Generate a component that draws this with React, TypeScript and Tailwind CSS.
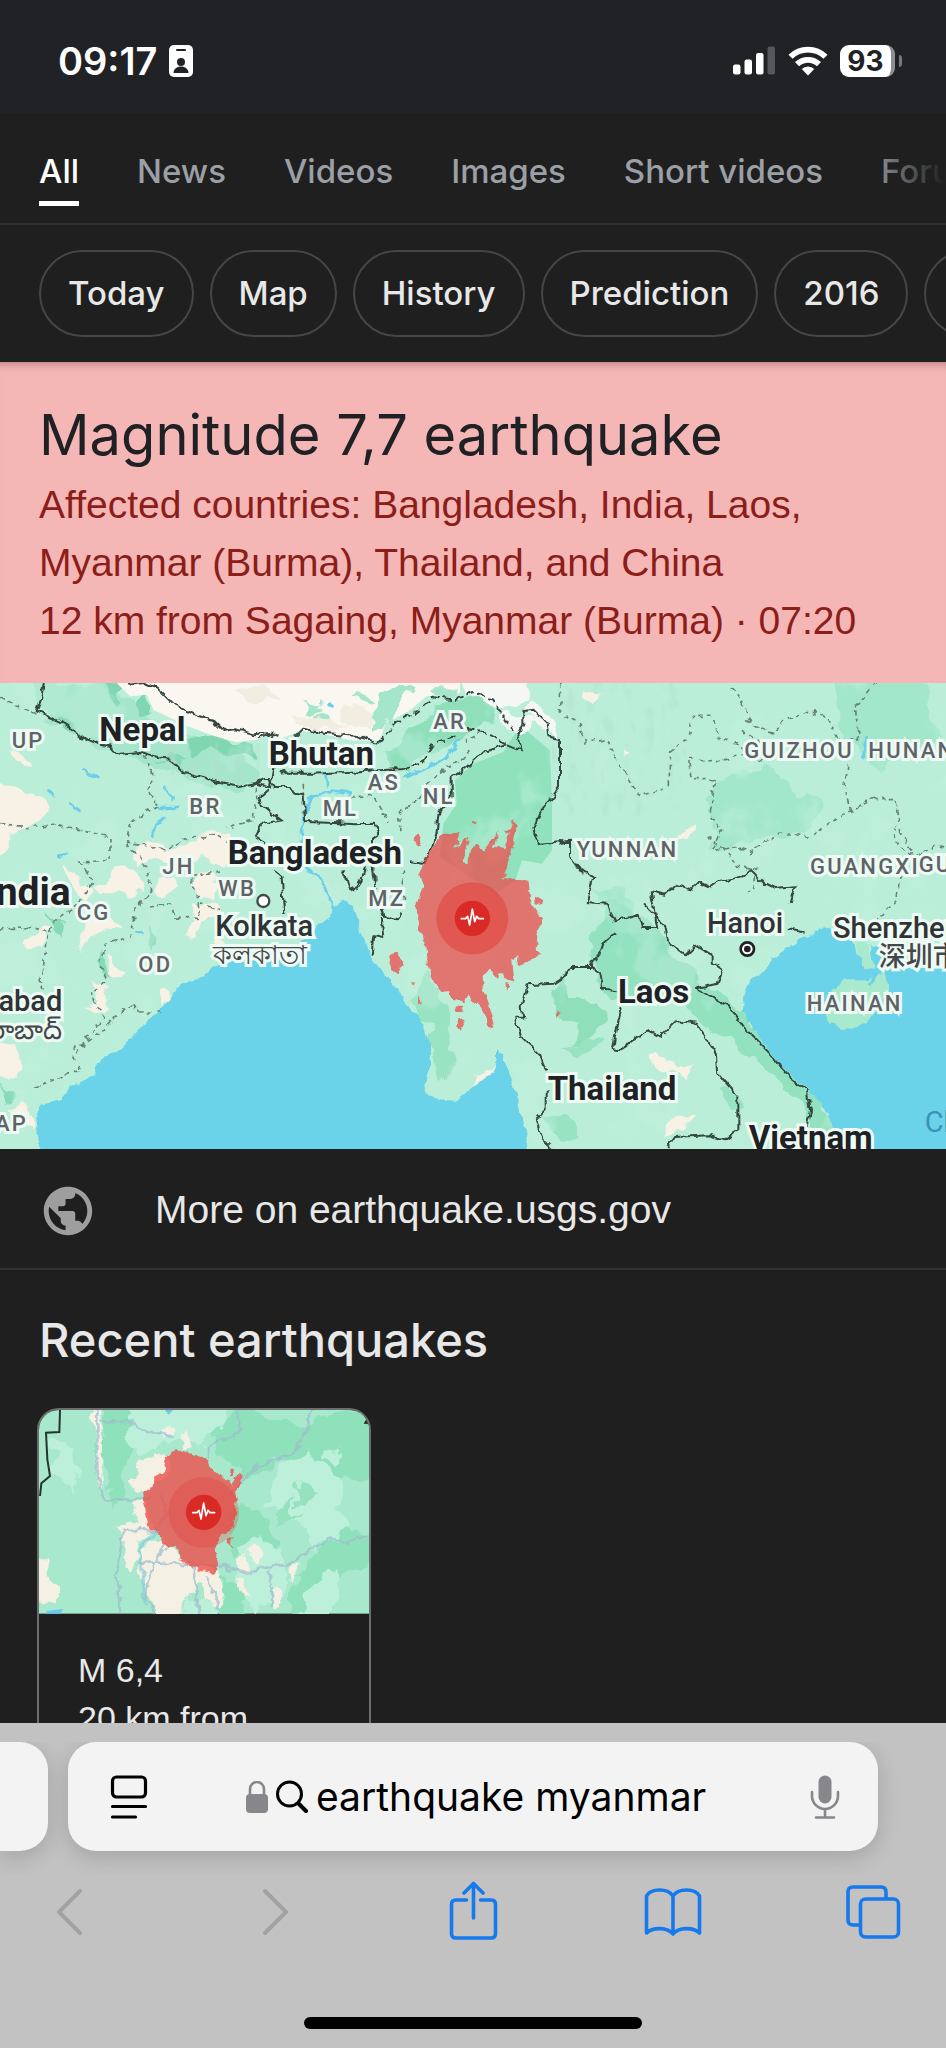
import { MdPublic } from 'react-icons/md';

type MapLabel = {
  text: string;
  x: number;
  y: number;
  kind: 'nation' | 'country' | 'city' | 'native' | 'region' | 'sea';
  end?: boolean;
};

const MAP_W = 2838;
const MAP_H = 1398;

const TABS = ['All', 'News', 'Videos', 'Images', 'Short videos', 'Forums'];
const CHIPS = ['Today', 'Map', 'History', 'Prediction', '2016', 'Live'];

const LABELS: MapLabel[] = [
  { text: 'UP', x: 35, y: 174, kind: 'region' },
  { text: 'BR', x: 568, y: 372, kind: 'region' },
  { text: 'JH', x: 487, y: 552, kind: 'region' },
  { text: 'WB', x: 655, y: 619, kind: 'region' },
  { text: 'CG', x: 230, y: 690, kind: 'region' },
  { text: 'OD', x: 415, y: 845, kind: 'region' },
  { text: 'AP', x: 84, y: 1324, kind: 'region', end: true },
  { text: 'ML', x: 968, y: 378, kind: 'region' },
  { text: 'AS', x: 1103, y: 299, kind: 'region' },
  { text: 'AR', x: 1300, y: 117, kind: 'region' },
  { text: 'NL', x: 1268, y: 342, kind: 'region' },
  { text: 'MZ', x: 1105, y: 649, kind: 'region' },
  { text: 'YUNNAN', x: 1730, y: 502, kind: 'region' },
  { text: 'GUIZHOU', x: 2233, y: 204, kind: 'region' },
  { text: 'HUNAN', x: 2605, y: 204, kind: 'region' },
  { text: 'GUANGXI', x: 2430, y: 553, kind: 'region' },
  { text: 'GUANGDONG', x: 2756, y: 547, kind: 'region' },
  { text: 'HAINAN', x: 2420, y: 962, kind: 'region' },
  { text: 'Nepal', x: 298, y: 138, kind: 'country' },
  { text: 'Bhutan', x: 806, y: 210, kind: 'country' },
  { text: 'Bangladesh', x: 683, y: 508, kind: 'country' },
  { text: 'Laos', x: 1854, y: 925, kind: 'country' },
  { text: 'Thailand', x: 1643, y: 1215, kind: 'country' },
  { text: 'Vietnam', x: 2246, y: 1363, kind: 'country' },
  { text: 'India', x: 212, y: 626, kind: 'nation', end: true },
  { text: 'Kolkata', x: 646, y: 729, kind: 'city' },
  { text: 'কলকাতা', x: 640, y: 816, kind: 'native' },
  { text: 'Hyderabad', x: 187, y: 954, kind: 'city', end: true },
  { text: 'హైదరాబాద్', x: 187, y: 1042, kind: 'native', end: true },
  { text: 'Hanoi', x: 2121, y: 720, kind: 'city' },
  { text: 'Shenzhen', x: 2499, y: 735, kind: 'city' },
  { text: '深圳市', x: 2636, y: 822, kind: 'native' },
  { text: 'China Sea', x: 2774, y: 1317, kind: 'sea' },
];

const HALO = '[paint-order:stroke_fill] [-webkit-text-stroke:6px_#eefaf4]';

const LABEL_STYLES = {
  nation: `text-[39px] font-bold text-[#202124] ${HALO}`,
  country: `text-[33px] font-bold text-[#202124] ${HALO}`,
  city: `text-[29px] font-medium text-[#303336] ${HALO}`,
  native: `text-[27px] font-medium text-[#45484b] ${HALO}`,
  region: `text-[22px] font-medium tracking-widest text-[#5f6368] ${HALO}`,
  sea: 'text-[29px] text-[#3a93b5]',
};

const SANS = "font-['Liberation_Sans',Arial,sans-serif]";
const DISPLAY = "font-['Inter',sans-serif]";

function StatusBar() {
  return (
    <header className={`flex h-[113px] shrink-0 items-center justify-between bg-[#202226] pt-2 pr-11 pl-[58px] text-white ${DISPLAY}`}>
      <div className="flex items-center gap-3">
        <time className="text-[38px] leading-none font-semibold">09:17</time>
        <svg width="24" height="32" viewBox="0 0 24 32" aria-hidden="true">
          <rect width="24" height="32" rx="5" fill="#fff" />
          <rect x="7" y="4" width="10" height="2" rx="1" fill="#202226" />
          <circle cx="12" cy="17" r="4" fill="#202226" />
          <path d="M4.500 28c0-4 3.500-6.500 7.500-6.500s7.500 2.500 7.500 6.500z" fill="#202226" />
        </svg>
      </div>
      <div className="flex items-center gap-3">
        <svg width="43" height="29" viewBox="0 0 43 29" aria-hidden="true">
          <rect x="0" y="18.500" width="7.500" height="10" rx="2.200" fill="#fff" />
          <rect x="11.500" y="13.500" width="7.500" height="15" rx="2.200" fill="#fff" />
          <rect x="23" y="7" width="7.500" height="21.500" rx="2.200" fill="#fff" />
          <rect x="34.500" y="0.500" width="7.500" height="28" rx="2.200" fill="#56575b" />
        </svg>
        <svg width="40" height="30" viewBox="0 0 40 30" aria-hidden="true" fill="none" stroke="#fff" strokeWidth="5.800">
          <path d="M2.500 10.800a25 25 0 0 1 35 0" />
          <path d="M9 18.200a16 16 0 0 1 22 0" />
          <path d="M20 29.500l-6.300-6.500a9 9 0 0 1 12.600 0z" fill="#fff" stroke="none" />
        </svg>
        <div className="flex items-center gap-1">
          <span className="flex h-8 w-[55px] items-center justify-center rounded-[9px] border-r-4 border-[#8d8e90] bg-white text-[28px] leading-none font-bold text-[#202226]">
            93
          </span>
          <span className="h-3 w-[3px] rounded-r-full bg-[#77787b]" />
        </div>
      </div>
    </header>
  );
}

function SearchTabs() {
  return (
    <nav className={`relative flex h-28 gap-[58px] overflow-hidden border-b-2 border-[#313133] pl-[39px] ${DISPLAY}`}>
      {TABS.map((tab, i) => (
        <a
          key={tab}
          href="#"
          className={`mt-[34px] h-[59px] shrink-0 text-[33px] leading-[48px] font-medium whitespace-nowrap ${
            i === 0 ? 'border-b-5 border-white text-white' : 'text-[#9aa0a6]'
          }`}
        >
          {tab}
        </a>
      ))}
      <div className="absolute inset-y-0 right-0 w-20 bg-linear-to-r from-transparent to-[#1f1f1f]" />
    </nav>
  );
}

function FilterChips() {
  return (
    <div className={`flex gap-4 overflow-hidden py-[25px] pl-[39px] ${DISPLAY}`}>
      {CHIPS.map(chip => (
        <button
          key={chip}
          type="button"
          className="h-[87px] shrink-0 rounded-full border-2 border-[#444648] px-[27px] text-[33px] font-medium text-[#e8e8e8]"
        >
          {chip}
        </button>
      ))}
    </div>
  );
}

function QuakePin({ x, y, halo, haloOpacity }: { x: number; y: number; halo: number; haloOpacity: number }) {
  return (
    <g transform={`translate(${x} ${y})`}>
      <circle r={halo} fill="#e2352f" fillOpacity={haloOpacity} />
      <circle r="53" fill="#da2a25" />
      <path
        d="M-33 1h13l6-7 6 26 8-48 7 38 6-16 6 7h14"
        fill="none"
        stroke="#fff"
        strokeWidth="5"
        strokeLinejoin="round"
        strokeLinecap="round"
      />
    </g>
  );
}

function RegionMap() {
  return (
    <div className="relative aspect-[2838/1398] w-full overflow-hidden bg-[#b9eed7]">
      <svg className="block size-full" viewBox="0 38 2838 1398" role="img" aria-label="Shake map of Myanmar and its neighbours">
        <defs>
          <filter id="terrain" x="0" y="0" width="100%" height="100%">
            <feTurbulence type="fractalNoise" baseFrequency="0.006 0.005" numOctaves="4" seed="8" />
            <feColorMatrix values="0 0 0 0 0.54  0 0 0 0 0.88  0 0 0 0 0.73  9 0 0 0 -5" />
          </filter>
          <filter id="relief" x="0" y="0" width="100%" height="100%">
            <feTurbulence type="fractalNoise" baseFrequency="0.03 0.014" numOctaves="3" seed="3" />
            <feColorMatrix values="0 0 0 0 0.45  0 0 0 0 0.72  0 0 0 0 0.62  5 0 0 0 -2.700" />
          </filter>
          <filter id="ragged" filterUnits="userSpaceOnUse" x="-60" y="-20" width="2960" height="1520">
            <feTurbulence type="fractalNoise" baseFrequency="0.012" numOctaves="3" seed="5" />
            <feDisplacementMap in="SourceGraphic" scale="80" xChannelSelector="R" yChannelSelector="G" />
          </filter>
          <filter id="wiggle" filterUnits="userSpaceOnUse" x="-60" y="-20" width="2960" height="1520">
            <feTurbulence type="fractalNoise" baseFrequency="0.035" numOctaves="2" seed="9" />
            <feDisplacementMap in="SourceGraphic" scale="24" xChannelSelector="R" yChannelSelector="G" />
          </filter>
        </defs>

        {/* Land cover */}
        <rect y="38" width="2838" height="1398" fill="#baeed8" />
        <path d="M1320 560l10-100 40-60-5-70 55-50 90-35 50-80 90 75 6 160v140l-30 40-60-10-20 60-60 40z" fill="#90e2bd" />
        <g filter="url(#ragged)">
          <path d="M2500 0h260l60 198-180 90-110-80z M2130 340l190-40 150 120-60 70-260 40z M1780 640l90 20 50 90-60 20z" fill="#a3e7cb" />
          <path d="M1820 680l130 60 80 130 140 90 160 190 130 130 60 110-70-20-120-150-180-130-160-130-140 40-80-140z" fill="#92e1bf" />
          <path d="M1640 960l50-40 30 60 60 0 30 60-40 70-50 10 20-70-60-20z M1150 250l150-130 140-60 40 100-160 70-120 80z" fill="#8fdfbb" />
          <path d="M1280 900l60 120 30 160-50 60-30-140-50-100z M1690 1140l60-30 60 20-40 30z M1640 1330l60 20 30 60-60 0z M2150 1240l60 30 30 40-50 10z" fill="#98e3c2" />
          <path d="M110 40h240l50 60 50 50 120 40 110 40 90 80-30 60-150-30-150-70-150-40-170-90z" fill="#a5e6cb" />
          <path d="M395 95l50-20 20 60-50 15z M560 200l90-10 120 30 5 40-90-10-110 10z M310 38h50v50l-20 15z" fill="#7fd6b0" />
          <path d="M150 130l120 80-70-20z M470 250l90 10-30 20z M140 740l40 10-10 70-20-20z M440 780l40 20-30 25z M0 1240l40 5-30 60z M285 860l20-20 20 90-30-10z" fill="#86dab5" />
        </g>
        <rect y="38" width="2838" height="1398" filter="url(#terrain)" opacity="0.42" />
        <rect x="1656" y="38" width="400" height="400" filter="url(#relief)" opacity="0.35" />
        <rect x="500" y="190" width="280" height="140" filter="url(#relief)" opacity="0.5" />

        {/* Tibetan plateau */}
        <path d="M350 38l40 40 50-5 20 45 100 48 80 30 70 20 60-8 45-22 15 25 70-30 60 8 100 22 80-1 15-50 75-40 50-42 100-10v-30z" fill="#faf7f0" />
        <g filter="url(#ragged)">
          <path d="M1130 60l40-22h90l-40 40-60 90-40 20z M1300 45l80 5-20 30-50-5z M915 95l30-10 20 25-25 15z M950 125l40-5 10 25-30 5z M1060 75l40-15 20 20-30 10z" fill="#a5e6cb" />
          <path d="M700 60l110-10 40 40-90 20z M870 150l90-20 90 40-110 10z M1030 110l100 10-20 60-70-20z" fill="#f1ede1" />
          <path d="M1400 18h170l30 70-60 20-70 10-60-60z M1610 90l30 30 30 30-10 70-60-60-20-30z M1500 120l60 10 50 40-50 20-60-30z" fill="#f5f7f4" />
        </g>

        {/* Dry plains */}
        <g fill="#f7f1e6" filter="url(#ragged)">
          <path d="M-20 330l40 20 90 20 40 40-30 50-60 30-60 70-60 10z M20 240l40 20 50 40-40 5-50-40z M400 530l60-20 50 30 90-20 30-45 70 10 30 50-60 60-70-20-80 10-60-10-50 15z" />
          <path d="M190 580l40 10 10 40 50 20-20 60-50-60z M290 640l90-50 30 30 20 40-60 20-50-10z M470 620l60-10 10 50-60 20-20-30z M600 610l50 20-20 60-40-30z M555 680l60 10 50 50-60 0 0 70-40 10 20-70z M260 760l50-40 60 50-110 40-20 30z M80 800l60-20-10 50-50 10z" />
          <path d="M340 860l60 30-20 30-60 0z M260 930l60 40 0 40-80 10 40-40z M480 975l25-10 10 30-40 5z M-20 1120l80 10-20 90-60 10z M50 1270l60 90-10 30-80-70z M640 815l70 10-20 30-60-10z" />
          <path d="M1960 1165l120 15-20 60-30-40-60-10z M2000 1365l90-35-30 60-60 0z M1430 1220l60-30-20 40-50 20z M1755 50l40 20-10 40-40-20z M1870 225l30 20-30 5z M2035 480l30-20 5 30-30 5z" />
        </g>

        {/* Water */}
        <g fill="#6bd3e9" filter="url(#wiggle)">
          <path d="M118 1480l0-44-10-106 22-30 55-15 30-35 65-35 20-45 60-35 60-60 80-75 35-55 25-10 40-10 40-35 60-20 140-10 90-60 30-40 40-30-25-60 25 40 30-25 30 20 20 70 30 80 45 55 45 55 30 50 40 40 20 60v70l-17 80 47 25 50 5 40-40 38-25 40-35v-60l15 20 35 90 20 60 25 100 5 80z" />
          <path d="M2880 880l-192-40-75-15 10 75-35-20-25-50-5-30-60-20-30-15-40 35-40 10-30 30-45 25-10 30-55 40-15 45-5 40 30 50 40 60 60 70 70 60 50 60 20 50 5 110h420z" />
        </g>
        <g fill="#a9e9ce" filter="url(#wiggle)">
          <path d="M2498 960l40-30 60 0 55-25 15 45-30 60-40 50-50 18-60-18-20-50z M2565 815l40 10 20 70-35 5z" />
        </g>
        <g fill="none" stroke="#6bcfeb" strokeWidth="8" strokeLinecap="round" filter="url(#wiggle)">
          <path d="M1380 210l-40 50-70 40-60 20 M1050 370l-70-8-50 22-20 60-8 80 20 70 40 30 30 70 M980 315l5 30 M250 300l45 20 M490 350l30 40 M480 410h50 M490 440l-40 60 M210 400l25 20 M145 360l15 15 M175 560l25-8 M410 780l20 8 M985 100l10 8 M2600 200l-10 60 M2610 940l20-30" />
        </g>

        {/* Province lines */}
        <g fill="none" stroke="#66827a" strokeWidth="5" strokeDasharray="14 12" filter="url(#wiggle)">
          <path d="M0 80l50 30 60 20 M430 255l30 60-20 50 40 40-90 50-10 60 110 20 70-30 90-10 60 40 M0 460l90 10 60-10 90 20 90 20 0 70-90 5 40 60-50 70-60 40-30 60-20 120 10 60 M380 520l60 70 15 70-50 60-15 80-70 20-20 60 20 50-50 40 40 70-90 120 20 40-60 20-90 35 M480 1025l-70 0-10-25-30 20-70 70-90 50 M0 780l60-10 90 15 M450 710l60-10 20 40 70 5-10-80-20-50 90-10 M770 350l-10 100-80 20 M600 700l70 20 M910 340l0 100 M1050 380l70-5 40 80 M1200 480l-5-50 80-60 M1280 340l60-50 60-30 0-50 40-20 M1210 600l0 100 M1120 590l10 70" />
          <path d="M1683 38l-5 90 60 30 20 60 60-10 50 90 50 80 90-30 0-100 60-50 10-60 60 0 20 70 50 10 30 30-60 20-110 0 10 60 70 0-20 100 40 50-30 60 70-10 40 20 90-60 90 10 90-60 100-50 70 0 10 60-20 60 60 50 70-30 50 10 M2196 50l40 60 20 50 60 30 40-40 80-30 50 30 30 60 60 0-10-100 60-70 M2226 180l60 40-20 40 40 10 M2524 210l20 70-10 80 20 70 M2120 500l60 40 30 50 60 10-10 60-30 10 M2700 480l40 60-40 80-10 70-60 60 M2240 150l80 40" />
        </g>

        {/* National borders */}
        <g fill="none" stroke="#35443f" strokeWidth="6" strokeLinejoin="round" filter="url(#wiggle)">
          <path d="M133 20l-10 68-13 35 70 30 80 55 60 20 40 22 60-5 50 15 40 5 40 40 60 15 50 18 60 12 50-10 40 12 10-60-10-80 10-25-60 5-50-15-40 5-30-30-60-20-60-30-50-50-40-20-40 5-25-30" />
          <path d="M775 205l40-18 20 10 M840 295l20 15 80 0 100-5 90-5 100-5 M890 195l20-20 60 12 100 10 60 20 M905 180l-20 20" />
          <path d="M768 340l35-15 20 25 50 0 10 20 28 5 5 80 70 2 80 5 60-2 10 30-20 15 0 40 M805 360l-35 30 78 60-60 10-22 40 30 20 M820 600l25 20 8 110 M1030 600l15 50 20 10 20-30 10-40 M1230 573l45 5 35-90 5-55 40-50 0-60 40-30 60-50 60-20 50 20-10-50 15-30 0-40 30-5 40 40 5 40 35 10 0 140-60 80-20 50 20 50 90-20 0 50 30 40 40 20-20 80 60 5 25 50 70-20 12 40h45l-20-110 45 10 30-30 50 15 20-20 30 15 20-15 80-20 25-20 40 40 30 15 65-5-15 50" />
          <path d="M1115 590l10 70 30 80 40 10 10-30 M1145 740l5 60-30-5-5 60" />
          <path d="M1935 705l60 60 10 50 50 40 30-30 50 30 0 20 30 20-15 45-60 15 100 55 40 60 80 80 60 70 50 40 10 60-10 50" />
          <path d="M1845 790l-35 30-10 30-30 40-60 0-20 30-30 20-80 5-15 60 5 40-25 0 15 50 60 60 20 50 M1770 885l30 20 10 50 40 5 M1865 1010l-20 90-5 35 20 5 80-60 40 20 50-50 60 10 60 90 5 60 60 70 0 100-40 30-50-15-100 5-20 30 M1640 1260l0 60-30 30 20 60 60 60" />
          <path d="M2360 775l60 12" />
        </g>
        <g fill="none" stroke="#35443f" strokeWidth="6" strokeDasharray="24 12" filter="url(#wiggle)">
          <path d="M1130 218l60-60 70-40 40-40 60 10 60-20 60 20 40 70 20 20 M1200 300l60-20 40-60 70-20 M1400 175l70 15 50 30" />
        </g>

        {/* Shaking extent */}
        <g filter="url(#wiggle)">
          <path
            transform="translate(1200 420)"
            d="M122 72L185 66 165 115 205 78 188 152 202 156 226 94 248 126 292 66 282 112 314 116 326 66 308 62 328 54 340 28 350 58 330 140 310 204 345 205 386 214 390 260 405 300 430 326 410 370 404 420 426 436 385 450 352 472 356 434 334 450 340 516 322 512 304 484 286 502 268 474 248 496 252 540 274 600 286 650 266 642 242 594 206 554 190 576 156 566 150 542 124 545 106 520 80 460 76 400 54 350 50 290 70 224 60 190 84 130 110 92z M40 76l12-6 12 22-14 14-12-10z M405 262l26 8-6 16-18-4z M-30 430l16-6 20 32-8 34-22-14-10-20z M30 515l12 2-4 12z M52 555l14 24-14 2z M170 588l20 2-4 16-20-2z M176 622l16 16-10 20-10-14z M316 520l12 4-8 20z M470 600l14 8-12 14z M216 32l14 2-2 6-10 2z"
            fill="#ed4c49"
            fillOpacity="0.74"
          />
        </g>
        <QuakePin x={1417} y={744} halo={108} haloOpacity={0.45} />
        <circle cx="790" cy="692" r="18" fill="#fff" stroke="#45484b" strokeWidth="7" />
        <circle cx="2242" cy="836" r="20" fill="#fff" stroke="#202124" strokeWidth="8" />
        <circle cx="2242" cy="836" r="10" fill="#202124" />
      </svg>
      {LABELS.map(label => (
        <span
          key={label.text}
          style={{ left: `${(label.x / MAP_W) * 100}%`, top: `${(label.y / MAP_H) * 100}%` }}
          className={`absolute -translate-y-1/2 font-['Roboto','Noto_Sans_CJK_SC',sans-serif] leading-none whitespace-nowrap ${
            label.end ? '-translate-x-full' : ''
          } ${LABEL_STYLES[label.kind]}`}
        >
          {label.text}
        </span>
      ))}
    </div>
  );
}

function CardMap() {
  return (
    <svg className="block w-full" viewBox="117 92 990 611" role="img" aria-label="Shake map">
      <defs>
        <filter id="card-ragged" filterUnits="userSpaceOnUse" x="60" y="40" width="1110" height="720">
          <feTurbulence type="fractalNoise" baseFrequency="0.016" numOctaves="3" seed="4" />
          <feDisplacementMap in="SourceGraphic" scale="80" xChannelSelector="R" yChannelSelector="G" />
        </filter>
        <filter id="card-wiggle" filterUnits="userSpaceOnUse" x="60" y="40" width="1110" height="720">
          <feTurbulence type="fractalNoise" baseFrequency="0.03" numOctaves="3" seed="2" />
          <feDisplacementMap in="SourceGraphic" scale="30" xChannelSelector="R" yChannelSelector="G" />
        </filter>
      </defs>
      <rect x="117" y="92" width="990" height="611" fill="#a8e9ce" />
      <g filter="url(#card-ragged)">
        <path d="M300 52h120l20 120-60 80-30 140-40-100z M620 130l90-30 200 40 100-40 157 30v140l-130 40-80-60-90-20-120 60-80-60z M700 380l80 20 60 90-50 60-100-40z M860 640l80-120 90-60 137 0v80l-150 60-60 143h-60z M660 590l60 30 20 143h-80z" fill="#8fe1bc" />
        <path d="M400 52h300l-40 100-80 40-60-20-80 60-60-20z M840 260l70-60 60 60 60 40-20 90 40 60-110 60-50-80-90-60z M720 500l60-30 80 60-20 110-70 60-50-60z M560 650h80l20 113h-110z M150 170l60 30 20 140-60-60z M930 620l80-60 20 60-80 143h-40z M970 200l60 20-10 50-50-30z" fill="#bdf0db" />
        <path d="M870 320l50-20 10 50-50 30z M860 360l20 40 40 0-40 20-50 0z" fill="#95e2be" />
      </g>
      <g fill="#f5f0e4" filter="url(#card-wiggle)">
        <path d="M275 72h28l6 260-16-20-6-160-10-20z M410 250l80-30 30 40-40 50-60-20z M385 310l40-30 40 20-10 40-60-10z M390 370l50-10 20 90-30 30-60 0-20-40 60-10z M540 160l20 0 20 50-20 0z M480 150l30-10 10 20-30 20z" />
        <path d="M380 470l30 0 10 60-30 50-20-40z M440 480l60 10 60 60 100 20 10 110-30 0-40-70-50 50-10 83h-60l-30-100-40-60z M90 540l47 0 20 70 20 20-10 40-77 0z M740 510l30-20 20 40-20 30z M710 540l20-20 20 60-30 0z M710 600l20 0 20 60-20-10z M880 550l20 0-30 60-5-40z M820 620l20 10 0 50-20 10z" />
      </g>
      <g fill="none" stroke="#9dbccd" strokeOpacity="0.7" strokeWidth="8" strokeLinejoin="round" filter="url(#card-wiggle)">
        <path d="M292 72l0 200 20 90 110-4 30 0 M300 128l90 0 50 25 80 20 M705 80l20 70-40 30-60 20-5 30 M940 72l-30 110-30 40-110 40-40 40-40 40 M360 700l-10-150 20-90 50-10 50 10 30-60-20-60 M470 723l-30-70 10-80 50-80 M415 550h70l80 5 110 5 60 20 130-30 120-70 50 10 90-20 M580 560l20 160 M620 590l40 100 M810 570l5 110" />
        <path d="M480 460l-50 20-10 60 10 60 5 80" stroke="#83c9dc" />
      </g>
      <path d="M495 92h25l-15 14z M140 695l50-6-10 14h-40z" fill="#69c9ee" />
      <path d="M180 92l-2 66-40 2 4 80 8 50-26 22-4 38" fill="none" stroke="#27332f" strokeWidth="6" />
      <path d="M1107 105l-16 28 16 2z" fill="#27332f" />
      <g filter="url(#card-wiggle)">
        <path
          d="M497 232L512 214 540 208 572 220 600 232 626 234 632 268 650 290 684 300 694 316 712 286 728 290 722 318 708 330 714 362 698 378 718 402 704 430 692 452 664 466 650 498 652 530 642 584 612 574 572 560 540 540 534 508 490 496 482 464 448 450 440 410 434 376 424 350 436 334 456 334 462 286 480 284 500 262z M690 268h8v26l-12-4z M682 480l16 0-2 24-12-10z"
          fill="#ed4c49"
          fillOpacity="0.78"
        />
      </g>
      <QuakePin x={611} y={399} halo={106} haloOpacity={0.25} />
    </svg>
  );
}

function BrowserBar() {
  return (
    <footer className="shrink-0 bg-[#c2c2c2] pt-[19px]">
      <div className="flex gap-5 overflow-hidden pb-6">
        <div className="h-[109px] w-12 shrink-0 rounded-r-[28px] bg-[#f3f3f4] shadow-[0_6px_22px_rgba(0,0,0,0.16)]" />
        <div className="mr-[68px] flex h-[109px] flex-1 items-center justify-between rounded-[28px] bg-[#f3f3f4] pr-[38px] pl-[42px] shadow-[0_6px_22px_rgba(0,0,0,0.16)]">
          <button type="button" aria-label="Page settings">
            <svg width="38" height="44" viewBox="0 0 38 44" fill="none" stroke="#000" strokeWidth="3.200" strokeLinecap="round">
              <rect x="2.500" y="2" width="33" height="20" rx="4" />
              <path d="M2.500 31.500h33M2.500 42h23" />
            </svg>
          </button>
          <label className="flex items-center gap-2">
            <svg width="22" height="32" viewBox="0 0 22 32" aria-hidden="true">
              <path d="M4 14V8a7 7 0 0 1 14 0v6" fill="none" stroke="#87878b" strokeWidth="2.600" />
              <rect y="13" width="22" height="19" rx="4" fill="#87878b" />
            </svg>
            <svg width="32" height="34" viewBox="0 0 32 34" fill="none" stroke="#000" strokeLinecap="round" aria-hidden="true">
              <circle cx="13.500" cy="14" r="12" strokeWidth="3" />
              <path d="M22.500 23.500l7.500 7.500" strokeWidth="4" />
            </svg>
            <input
              type="text"
              aria-label="Address"
              defaultValue="earthquake myanmar"
              className={`w-[396px] bg-transparent text-[39px] leading-[48px] text-black outline-none ${DISPLAY}`}
            />
          </label>
          <button type="button" aria-label="Voice search">
            <svg width="30" height="44" viewBox="0 0 30 44" fill="none" stroke="#87878b" strokeWidth="2.600" strokeLinecap="round">
              <rect x="8.500" y="0.500" width="13" height="28" rx="6.500" fill="#87878b" stroke="none" />
              <path d="M2 17v4a13 13 0 0 0 26 0v-4M15 34.500V42M6 42.500h18" />
            </svg>
          </button>
        </div>
      </div>
      <div className="mt-[6px] flex justify-between pr-[43px] pl-10 text-[#167aec]">
        <button type="button" aria-label="Back" disabled className="text-[#a2a2a2]">
          <svg width="60" height="60" viewBox="0 0 60 60" fill="none" stroke="currentColor" strokeWidth="4" strokeLinecap="round" strokeLinejoin="round">
            <path d="M40 10L19 31l21 21" />
          </svg>
        </button>
        <button type="button" aria-label="Forward" disabled className="text-[#a2a2a2]">
          <svg width="60" height="60" viewBox="0 0 60 60" fill="none" stroke="currentColor" strokeWidth="4" strokeLinecap="round" strokeLinejoin="round">
            <path d="M24 10l21 21-21 21" />
          </svg>
        </button>
        <button type="button" aria-label="Share">
          <svg width="60" height="60" viewBox="0 0 60 60" fill="none" stroke="currentColor" strokeWidth="3.600" strokeLinecap="round" strokeLinejoin="round">
            <path d="M24.500 19H14q-4.500 0-4.500 4.500v29q0 4.500 4.500 4.500h35q4.500 0 4.500-4.500v-29Q53.500 19 49 19H38.500M31.500 37V3.500M22 12l9.500-9.500L41 12" />
          </svg>
        </button>
        <button type="button" aria-label="Bookmarks">
          <svg width="60" height="60" viewBox="0 0 60 60" fill="none" stroke="currentColor" strokeWidth="3.600" strokeLinecap="round" strokeLinejoin="round">
            <path d="M31 15v37M31 15C26 7 9 7 4.500 15v37c6-6 21-6 26.500 1 5.500-7 20.500-7 26.500-1V15C53 7 36 7 31 15z" />
          </svg>
        </button>
        <button type="button" aria-label="Tabs">
          <svg width="60" height="60" viewBox="0 0 60 60" fill="none" stroke="currentColor" strokeWidth="3.600" strokeLinejoin="round">
            <rect x="17.500" y="18" width="38" height="38" rx="5" />
            <path d="M17.500 44H10q-5 0-5-5V11q0-5 5-5h28q5 0 5 5v7" />
          </svg>
        </button>
      </div>
      <div className="mx-auto mt-[76px] mb-[19px] h-3 w-[338px] rounded-full bg-black" />
    </footer>
  );
}

export default function App() {
  return (
    <div className={`flex h-screen flex-col overflow-hidden bg-[#1f1f1f] ${SANS}`}>
      <StatusBar />
      <main className="min-h-0 flex-1 overflow-hidden">
        <SearchTabs />
        <FilterChips />

        <section className="bg-[#f4b7b6] px-[39px] pt-[35px] pb-[33px] shadow-[inset_0_10px_8px_-8px_rgba(90,40,40,0.4)]">
          <h1 className={`mb-[3px] text-[56px] leading-[76px] text-[#202124] ${DISPLAY}`}>Magnitude 7,7 earthquake</h1>
          <p className="text-[39px] leading-[58px] text-[#8c1d18]">
            Affected countries: Bangladesh, India, Laos, Myanmar (Burma), Thailand, and China
            <br />
            12 km from Sagaing, Myanmar (Burma) · 07:20
          </p>
        </section>

        <RegionMap />

        <a href="#" className="flex h-[121px] items-center gap-[58px] border-b-2 border-[#313133] px-[39px] pt-1 text-[#e8e8e8]">
          <MdPublic size={58} className="text-[#9e9e9e]" />
          <span className="text-[39px]">More on earthquake.usgs.gov</span>
        </a>

        <section className="px-[37px] pt-[38px]">
          <h2 className={`px-[2px] text-[47px] leading-[64px] font-medium text-[#e8e8e8] ${DISPLAY}`}>Recent earthquakes</h2>
          <article className="mt-9 w-[334px] overflow-hidden rounded-[22px] border-2 border-[#6b6d6f]">
            <CardMap />
            <div className="px-[39px] pt-8 pb-10 text-[34px] leading-[48px] text-[#e8e8e8]">
              <p>M 6,4</p>
              <p>20 km from Sagaing</p>
            </div>
          </article>
        </section>
      </main>
      <BrowserBar />
    </div>
  );
}
